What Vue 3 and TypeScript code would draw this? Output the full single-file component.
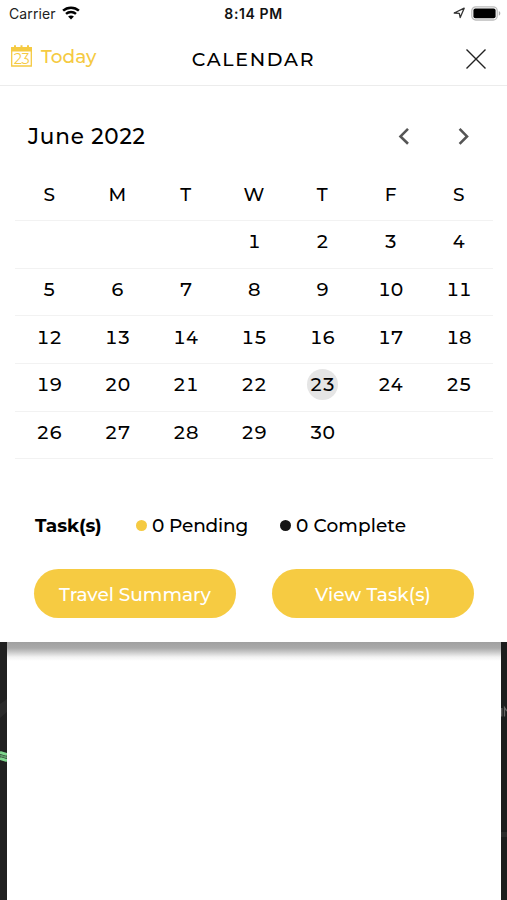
<script setup lang="ts">
import { ref } from 'vue'

const weekdays: string[] = ['S', 'M', 'T', 'W', 'T', 'F', 'S']
const firstOffset = 3
const daysInMonth = 30
const selected = ref(23)

const weeks: (number | null)[][] = Array.from({ length: 5 }, (_, w) =>
  Array.from({ length: 7 }, (_, d) => {
    const day = w * 7 + d - firstOffset + 1
    return day > 0 && day <= daysInMonth ? day : null
  }),
)
</script>

<template>
  <div class="screen">
    <section class="sheet">
      <div class="status">
        <div class="carrier">
          <span class="carrier-name">Carrier</span>
          <svg class="wifi" width="18" height="14" viewBox="0 0 18 14">
            <path d="M1.1 4.7C5.5.6 12.5.6 16.9 4.7" fill="none" stroke="#000" stroke-width="2.5" />
            <path d="M4 7.9c2.8-2.6 7.2-2.6 10 0" fill="none" stroke="#000" stroke-width="2.4" />
            <path d="M6.1 10.5c1.6-1.5 4.2-1.5 5.8 0L9 13.5z" />
          </svg>
        </div>
        <span class="time">8:14 PM</span>
        <div class="indicators">
          <svg width="13" height="12" viewBox="0 0 13 12">
            <path d="M1.2 6 11.2 1.2 7.2 10.6 6.3 6.4z" fill="none" stroke="#333" stroke-width="1.3" stroke-linejoin="round" />
          </svg>
          <svg width="30" height="15" viewBox="0 0 30 15">
            <rect x=".8" y=".8" width="25.4" height="13.2" rx="4" fill="#fff" stroke="#bcbcbc" stroke-width="1.3" />
            <rect x="2.4" y="2.5" width="22.2" height="9.8" rx="2" />
            <path d="M27.8 5.1c2 .8 2 3.8 0 4.6z" fill="#aaa" />
          </svg>
        </div>
      </div>

      <header class="bar">
        <button class="today">
          <svg width="21" height="22" viewBox="0 0 21 22">
            <path d="M0 2h3V.3h2V2h4.5V.3h2V2H16V.3h2V2h3v4.6H0z" fill="#f5ca42" />
            <path d="M.7 6v15h19.6V6" fill="none" stroke="#f5ca42" stroke-width="1.3" />
            <text x="10.5" y="18.6" text-anchor="middle" class="icon-day">23</text>
          </svg>
          <span class="today-label">Today</span>
        </button>
        <h1 class="title">CALENDAR</h1>
        <button class="close" aria-label="Close">
          <svg width="22" height="22" viewBox="0 0 22 22">
            <path d="M1.5 1.5 20.5 20.5M20.5 1.5 1.5 20.5" stroke="#222" stroke-width="1.4" />
          </svg>
        </button>
      </header>

      <div class="month">
        <h2 class="month-name">June 2022</h2>
        <div class="arrows">
          <button aria-label="Previous month">
            <svg width="12" height="18" viewBox="0 0 12 18">
              <path d="M10 1.9 2.5 9.4l7.5 7.4" fill="none" stroke="#555" stroke-width="2.6" />
            </svg>
          </button>
          <button aria-label="Next month">
            <svg width="12" height="18" viewBox="0 0 12 18">
              <path d="M1.6 1.9 9 9.4l-7.4 7.4" fill="none" stroke="#555" stroke-width="2.6" />
            </svg>
          </button>
        </div>
      </div>

      <div class="calendar">
        <div class="row head">
          <span v-for="(name, i) in weekdays" :key="i" class="cell">{{ name }}</span>
        </div>
        <div v-for="(week, w) in weeks" :key="w" class="row">
          <span v-for="(day, d) in week" :key="d" class="cell">
            <span v-if="day" class="day" :class="{ selected: day === selected }" @click="selected = day">{{ day }}</span>
          </span>
        </div>
      </div>

      <div class="tasks">
        <strong class="tasks-title">Task(s)</strong>
        <span class="legend pending"><i class="dot"></i><span class="pending-label">0 Pending</span></span>
        <span class="legend complete"><i class="dot"></i><span class="complete-label">0 Complete</span></span>
      </div>

      <div class="actions">
        <button class="action"><span class="travel-label">Travel Summary</span></button>
        <button class="action"><span class="view-label">View Task(s)</span></button>
      </div>
    </section>

    <div class="behind">
      <div class="map left">
        <svg width="7" height="258" viewBox="0 0 7 258">
          <path d="M0 62 7 57V70L0 76z" fill="#2a2a2a" />
          <path d="M0 110.5 7 112.5M0 116.5 7 118.5" stroke="#7ed58d" stroke-width="3" />
          <path d="M0 113.5 7 115.5" stroke="#5f9a6a" stroke-width="2" />
        </svg>
      </div>
      <div class="panel"></div>
      <div class="map right">
        <svg width="6" height="258" viewBox="0 0 6 258">
          <path d="M.8 66V74.5M3.5 74.5v-9L6 69" fill="none" stroke="#666" stroke-width="1.3" />
          <path d="M0 190h6v5H0z" fill="#292b2b" />
        </svg>
      </div>
    </div>
  </div>
</template>

<style>
body {
  margin: 0;
  background: #fff;
}
</style>

<style scoped>
.screen {
  width: 507px;
  height: 900px;
  overflow: hidden;
  background: #fff;
  color: #000;
  font-family: Montserrat, Inter, sans-serif;
  display: flex;
  flex-direction: column;
}
* {
  box-sizing: border-box;
}
button {
  display: flex;
  border: 0;
  padding: 0;
  background: none;
  font: inherit;
  color: inherit;
}
svg {
  display: block;
  flex: none;
}
span,
strong,
h1,
h2 {
  white-space: nowrap;
}
.sheet {
  height: 642px;
  flex: none;
  background: #fff;
}
.status {
  height: 28px;
  padding: 0 6px 0 9px;
  display: grid;
  grid-template-columns: 1fr auto 1fr;
  align-items: center;
  font-family: Inter, sans-serif;
}
.carrier {
  display: flex;
  align-items: center;
  gap: 6px;
}
.carrier-name {
  font-size: 14px;
  letter-spacing: 0.1px;
  margin-top: -2px;
  color: #222;
}
.wifi {
  margin-top: -2px;
}
.time {
  margin: -2px 0 0 -3px;
  font-size: 14px;
  font-weight: 600;
  letter-spacing: 0.6px;
  color: #111;
}
.indicators {
  display: flex;
  justify-content: flex-end;
  align-items: center;
  gap: 5px;
  margin-top: -2px;
}
.bar {
  height: 58px;
  padding: 0 20px 0 11px;
  display: grid;
  grid-template-columns: 1fr auto 1fr;
  align-items: center;
  border-bottom: 1px solid #ececec;
}
.today {
  align-items: center;
  gap: 9px;
  color: #f5ca42;
  margin-top: -1px;
}
.today-label {
  margin-top: 1px;
  font-size: 18.5px;
  font-weight: 500;
}
.icon-day {
  font-size: 14.5px;
  font-weight: 400;
  letter-spacing: -0.4px;
  fill: #f5ca42;
}
.title {
  margin: 6px 0 0 9px;
  font-size: 19px;
  font-weight: 500;
  letter-spacing: 1.7px;
}
.close {
  justify-self: end;
  margin-top: 4px;
}
.month {
  height: 100px;
  padding: 0 37px 0 28px;
  display: flex;
  justify-content: space-between;
  align-items: center;
}
.month-name {
  margin: 0;
  font-size: 21.5px;
  font-weight: 500;
  letter-spacing: 0.8px;
}
.arrows {
  display: flex;
  gap: 48px;
}
.calendar {
  padding: 0 14px 0 15px;
  margin-top: -17px;
}
.row {
  height: 47.7px;
  display: grid;
  grid-template-columns: repeat(7, 1fr);
  align-items: center;
  font-size: 18.5px;
  font-weight: 500;
  font-variant-numeric: tabular-nums;
  letter-spacing: -0.3px;
  border-bottom: 1px solid #f2f2f2;
}
.row.head {
  height: 52px;
  letter-spacing: 0;
}
.cell {
  display: flex;
  justify-content: center;
}
.day {
  width: 31px;
  height: 31px;
  margin-top: -5px;
  border-radius: 50%;
  display: flex;
  justify-content: center;
  align-items: center;
}
.selected {
  background: #e5e5e5;
}
.tasks {
  height: 30px;
  margin: 51px 0 0 35px;
  display: flex;
  align-items: center;
  font-size: 18.5px;
  font-weight: 500;
}
.tasks-title {
  width: 101px;
  font-weight: 700;
  letter-spacing: -0.1px;
}
.legend {
  display: flex;
  align-items: center;
  gap: 5px;
}
.pending {
  width: 144px;
}
.dot {
  width: 11px;
  height: 11px;
  border-radius: 50%;
  background: #f5ca42;
}
.complete .dot {
  background: #161616;
}
.actions {
  display: flex;
  gap: 36px;
  margin: 29px 0 0 34px;
}
.action {
  width: 202px;
  height: 49px;
  padding-top: 1px;
  border-radius: 25px;
  background: #f6cb42;
  color: #fff;
  align-items: center;
  justify-content: center;
  font-size: 18.5px;
  font-weight: 500;
}
.pending-label {
  letter-spacing: -0.15px;
}
.complete-label {
  letter-spacing: 0.1px;
}
.travel-label {
  letter-spacing: 0;
}
.view-label {
  letter-spacing: 0.1px;
}
.behind {
  flex: 1;
  display: flex;
}
.map {
  background: #202020;
  width: 7px;
}
.map.right {
  width: 6px;
  background: #1b1d1d;
}
.panel {
  flex: 1;
  background: linear-gradient(#a0a0a0, #aaa 6px, #c8c8c8 10px, #f2f2f2 15px, #fff 19px);
}
</style>
